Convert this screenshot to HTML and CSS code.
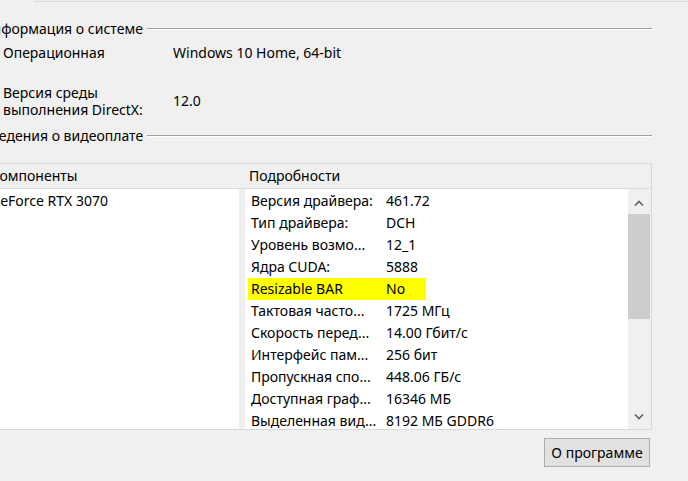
FILE: index.html
```html
<html lang="ru">
<head>
    <meta charset="UTF-8">
    <meta name="viewport" content="width=device-width, initial-scale=1.0">
    <title>Сведения о системе</title>

    <link rel="stylesheet" href="styles.css">

</head>
<body>

    <div class="tabs">
        <div class="tab"></div>
        <div class="tab tab-wide"></div>
    </div>

    <div class="page">
        <div class="group-title"><span>Информация о системе</span></div>

        <div class="info">
            <div class="info-label">Операционная</div>
            <div class="info-value">Windows 10 Home, 64-bit</div>

            <div class="info-label">Версия среды<br>выполнения DirectX:</div>
            <div class="info-value">12.0</div>
        </div>

        <div class="group-title group-title-gpu"><span>Сведения о видеоплате</span></div>

        <div class="frame">
            <div class="frame-head">
                <div class="head-left">Компоненты</div>
                <div class="head-right">Подробности</div>
            </div>

            <div class="frame-body">
                <div class="pane-left">
                    <div class="device">GeForce RTX 3070</div>
                </div>

                <div class="pane-right">
                    <div class="list">
                        <div class="row"><span>Версия драйвера:</span><span>461.72</span></div>
                        <div class="row"><span>Тип драйвера:</span><span>DCH</span></div>
                        <div class="row"><span>Уровень возмо...</span><span>12_1</span></div>
                        <div class="row"><span>Ядра CUDA:</span><span>5888</span></div>
                        <div class="row marked"><span>Resizable BAR</span><span>No</span></div>
                        <div class="row"><span>Тактовая часто...</span><span>1725 МГц</span></div>
                        <div class="row"><span>Скорость перед...</span><span>14.00 Гбит/с</span></div>
                        <div class="row"><span>Интерфейс пам...</span><span>256 бит</span></div>
                        <div class="row"><span>Пропускная спо...</span><span>448.06 ГБ/с</span></div>
                        <div class="row"><span>Доступная граф...</span><span>16346 МБ</span></div>
                        <div class="row"><span>Выделенная вид...</span><span>8192 МБ GDDR6</span></div>
                    </div>

                    <div class="scrollbar">
                        <svg class="arrow" width="10" height="6" viewBox="0 0 10 6"><polyline points="1,5.5 5,1.5 9,5.5" fill="none" stroke="#606060" stroke-width="1.6"/></svg>
                        <div class="thumb"></div>
                        <div class="track"></div>
                        <svg class="arrow" width="10" height="6" viewBox="0 0 10 6"><polyline points="1,0.5 5,4.5 9,0.5" fill="none" stroke="#606060" stroke-width="1.6"/></svg>
                    </div>
                </div>
            </div>
        </div>

        <div class="buttons">
            <button class="btn">О программе</button>
        </div>
    </div>

</body>
</html>
```

FILE: styles.css
```css
*{
    margin:0;
    padding:0;
    box-sizing:border-box;
}

body{
    background-color:#f0f0f0;
    font-family:"Noto Sans", sans-serif;
    font-size:14px;
    color:#000;
    overflow:hidden;
}

/* edge of the tab strip above the page */
.tabs{
    display:flex;
    margin-left:35px;
    height:2px;
    border-bottom:1px solid #d9d9d9;
}

.tab{
    width:93px;
    border-left:1px solid #e3e3e3;
    border-right:1px solid #e3e3e3;
}

.tab-wide{
    flex:1;
    border-left:none;
}

.page{
    margin-left:-18px;
    width:670px;
}

.group-title{
    display:flex;
    align-items:center;
    line-height:20px;
    margin-top:17px;
}

.group-title span{
    padding-right:4px;
}

.group-title::after{
    content:"";
    flex:1;
    border-top:1px solid #a0a0a0;
    border-bottom:1px solid #fff;
    margin-top:-1px;
}

.group-title-gpu{
    margin-top:8px;
}

.info{
    display:grid;
    grid-template-columns:170px 1fr;
    row-gap:21px;
    padding-left:21px;
    margin-top:4px;
}

.info-label{
    line-height:17px;
}

.info-value{
    line-height:20px;
    align-self:center;
}

.info-label:first-child{
    line-height:20px;
}

.frame{
    margin-top:17px;
    margin-left:6px;
    border:1px solid #d9d9d9;
}

.frame-head{
    display:flex;
    height:25px;
    line-height:24px;
    border-bottom:1px solid #d9d9d9;
}

.head-left{
    flex:1;
    padding-left:2px;
}

.head-right{
    width:406px;
    padding-left:4px;
}

.frame-body{
    display:flex;
    height:240px;
}

.pane-left{
    flex:1;
    margin-right:6px;
    background-color:#fff;
}

.device{
    line-height:22px;
    padding:1px 0 0 1px;
}

.pane-right{
    width:406px;
    display:flex;
}

.list{
    flex:1;
    background-color:#fff;
    padding-top:1px;
    overflow:hidden;
}

.row{
    display:flex;
    height:22px;
    line-height:22px;
    padding-left:6px;
    white-space:nowrap;
}

.row span:first-child{
    width:135px;
}

.marked{
    background:linear-gradient(#ffff00, #ffff00) no-repeat 3px 0;
    background-size:178px 100%;
}

.scrollbar{
    width:22px;
    margin-right:1px;
    display:flex;
    flex-direction:column;
    align-items:center;
}

.arrow{
    margin:11px 0 8px;
    flex:none;
}

.thumb{
    width:22px;
    height:105px;
    background-color:#cdcdcd;
}

.track{
    flex:1;
}

.scrollbar .arrow:last-child{
    margin:0 0 9px;
}

.buttons{
    display:flex;
    justify-content:flex-end;
    margin-top:8px;
    padding-right:2px;
}

.btn{
    width:106px;
    height:29px;
    font-family:"Noto Sans", sans-serif;
    font-size:14px;
    color:#000;
    background-color:#e1e1e1;
    border:1px solid #adadad;
}
```
